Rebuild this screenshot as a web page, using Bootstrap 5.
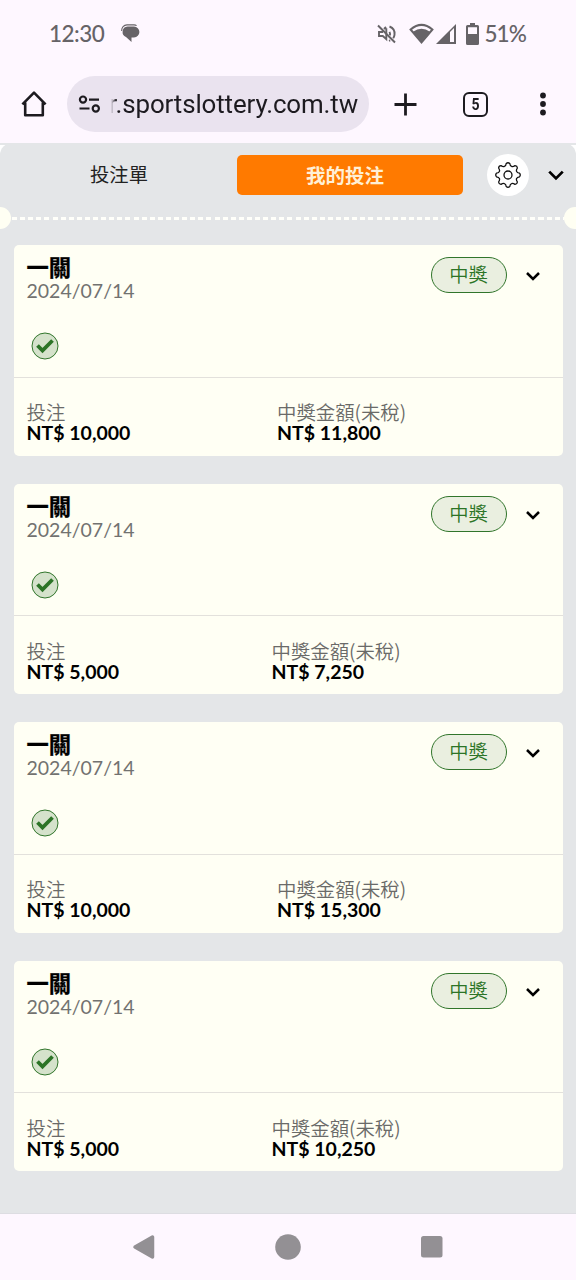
<!DOCTYPE html>
<html lang="zh-Hant">
<head>
<meta charset="utf-8">
<meta name="viewport" content="width=device-width, initial-scale=1">
<title>我的投注</title>
<link href="https://cdn.jsdelivr.net/npm/bootstrap@5.3.0/dist/css/bootstrap.min.css" rel="stylesheet">
<style>
body{width:576px;height:1280px;overflow:hidden;background:#fef7ff;font-family:Lato,"Noto Sans CJK TC",sans-serif;color:#000}
svg{display:block;flex:none}
.status{height:66px;padding:1px 50px 0 49px;color:#666367;font-size:22.5px;font-weight:500}
.status .clock{width:72px;letter-spacing:-.5px}
.status .charge{margin-left:5px;letter-spacing:-.9px}
.toolbar{height:77px;padding:0 23px 1px 20px;color:#1d1b20}
.address{width:302px;height:56px;margin-left:19px;background:#eae3ef;padding-left:11px}
.address .host{font:25.9px/58px Roboto,sans-serif;width:247px;margin-left:10px;overflow:hidden;direction:rtl;white-space:nowrap;letter-spacing:-.12px;-webkit-mask-image:linear-gradient(90deg,transparent,#000 5px)}
.tabcount{width:25px;height:25px;border:2.6px solid #1d1b20;border-radius:6px;font:700 16px/21px Roboto,sans-serif;text-align:center}
.tabcount span{display:inline-block;transform:scaleX(.88)}
.page-wrap{height:1071px;background:linear-gradient(#e4e6e8 2px,#fff 2px)}
.slip{height:1071px;background:#e4e6e8;border-radius:12px 12px 0 0;border-bottom:1px solid #dddde2}
.tabs-row{height:64px;padding:0 11px 0 1px}
.tab-link{width:236px;font-size:19.3px;color:#222;text-align:center;padding-top:1px}
.tab-on{width:226px;height:40px;padding:1px 10px 0 0;background:#ff7a00;color:#fff0d6;font-size:19.5px;font-weight:700;border-radius:5px}
.gear{width:42px;height:42px;background:#fff;margin-left:24px}
.perforation{height:22px;margin:0 -10px -1px -11px}
.perforation i{width:22px;height:22px;border-radius:50%;background:#fffff3;flex:none}
.perforation b{height:3px;flex:1;background:repeating-linear-gradient(90deg,#fffffa 0 5px,transparent 5px 8.1px);margin-left:1px}
.tickets{padding:17px 13px 0 14px;display:grid;gap:28px}
.ticket{height:210.6px;background:#fffff4;border-radius:5px}
.ticket-head{height:131.5px;padding:10px 22.5px 0 12.5px}
.ticket-title{font-size:22.3px;line-height:22px;height:24px;font-weight:700;font-family:"Noto Sans CJK TC",sans-serif;-webkit-text-stroke:.3px #000}
.ticket-date{font-size:19.5px;line-height:24px;height:23px;color:#727270}
.won{width:76px;height:36px;border:1px solid #31752b;background:#eaefe0;color:#2c7426;font-size:19.3px;font-weight:350;line-height:33px;text-align:center;margin:2px 18px 0 0}
.tick{margin:30px 0 0 4px}
.ticket-foot{border-top:1.5px solid #e3e1dc;padding:23.5px 13px 0 12.5px;line-height:21px}
.label{font-weight:350;font-size:19.4px;line-height:21px;height:21px;font-family:"Noto Sans CJK TC",sans-serif;color:#6a6a68;white-space:nowrap}
.sum{font-size:19.5px;font-weight:700;white-space:nowrap}
.stake{width:250.5px}.stake-s{width:245px}
.sysnav{height:66px;padding:0 132px 1px}
</style>
</head>
<body>
<svg width="0" height="0" class="position-absolute">
<symbol id="chev" viewBox="0 0 16 10"><path d="M2 2l6 6 6-6" fill="none" stroke="#000" stroke-width="2.5"/></symbol>
<symbol id="tick" viewBox="0 0 28 28"><circle cx="14" cy="14" r="13" fill="#d5e2cb" stroke="#31752b"/><path d="M6.5 13.5l5 5L21.5 8.500" fill="none" stroke="#2c7426" stroke-width="3.8"/></symbol>
</svg>

<header class="status d-flex align-items-center">
<span class="clock">12:30</span>
<svg width="19" height="19" viewBox="0 0 19 19"><path d="M6.500 2.600h6.500a5.200 5.200 0 0 1 0 10.800H10.500V18L5 13A5.400 5.400 0 0 1 6.500 2.600z" fill="#666367"/><path d="M.7 7C.5 3.500 2.800.900 6 .900h7c1.100 0 2 .3 2.600.8" fill="none" stroke="#666367" stroke-width="1.1"/></svg>
<svg class="ms-auto" width="20" height="20" viewBox="0 0 20 20" fill="none" stroke="#666367" stroke-width="1.900"><path d="M1 1.500l17 17"/><path d="M9.300 4.200v10.900L5.800 12H2V8h4M9 3L7 5M12.500 7.800q1 2 .3 3.600M12.500 2.500q5.800 2.300 5 8.300-.3 2-1.300 3.400M12 16.800l1.200-.5"/></svg>
<svg style="margin-left:12px" width="25" height="21" viewBox="0 0 25 21"><path d="M1.600 6.500Q12.500-2.700 23.400 6.500L12.500 19.400z" fill="none" stroke="#666367" stroke-width="2"/><path d="M4 8.800q8.500-6 17 0l-8.500 10z" fill="#666367"/></svg>
<svg style="margin-left:2px" width="20" height="20" viewBox="0 0 20 20"><path d="M0 20L20 0v20zM14 7.900V18h4V4z" fill="#666367" fill-rule="evenodd"/></svg>
<svg style="margin-left:10px" width="13" height="22" viewBox="0 0 13 22"><path d="M4 0h5v2h2.500Q13 2 13 3.500v17q0 1.500-1.500 1.500h-10Q0 22 0 20.500v-17Q0 2 1.500 2H4zM2 4.200V11h9V4.200z" fill="#666367" fill-rule="evenodd"/></svg>
<span class="charge">51%</span>
</header>

<nav class="toolbar d-flex align-items-center">
<svg width="28" height="28" viewBox="0 0 28 28" fill="none" stroke="#1d1b20" stroke-width="2.600"><path d="M2.400 14.300L14 2.700l11.600 11.600M5.200 12.500v12.700h17.600V12.500" stroke-linejoin="round"/></svg>
<div class="address rounded-pill d-flex align-items-center">
<svg width="23" height="18" viewBox="0 0 23 18" fill="none" stroke="#1d1b20" stroke-width="2.200"><circle cx="5" cy="4.600" r="3.100"/><path d="M11 4.600h10M1.500 13.500h10"/><circle cx="17.800" cy="13.500" r="3.100"/></svg>
<div class="host"><bdi>r.sportslottery.com.tw</bdi></div>
</div>
<svg style="margin-left:25px" width="23" height="23" viewBox="0 0 23 23"><path d="M11.500.5v22M.5 11.500h22" stroke="#1d1b20" stroke-width="2.800"/></svg>
<div class="tabcount" style="margin-left:46px"><span>5</span></div>
<svg class="ms-auto" width="20" height="24" viewBox="0 0 20 24" fill="#1d1b20"><circle cx="10" cy="3.500" r="2.900"/><circle cx="10" cy="12" r="2.900"/><circle cx="10" cy="20.500" r="2.900"/></svg>
</nav>

<div class="page-wrap">
<main class="slip overflow-hidden">
<div class="tabs-row d-flex align-items-center">
<div class="tab-link">投注單</div>
<div class="tab-on d-flex align-items-center justify-content-center">我的投注</div>
<div class="gear rounded-circle d-flex align-items-center justify-content-center">
<svg width="26" height="26" viewBox="0 0 26 26" fill="none" stroke="#111" stroke-width="1.300" stroke-linejoin="round"><circle cx="13" cy="13" r="4"/><path d="M11.200 1.500Q13 0 14.800 1.500Q15 4 16.600 4.400Q18 5 20 3.600q2.200.2 2.400 2.400Q21 8 21.600 9.400Q22 11 24.500 11.200q1.500 1.800 0 3.600Q22 15 21.600 16.600Q21 18 22.400 20q-.2 2.200-2.400 2.400Q18 21 16.600 21.600Q15 22 14.800 24.500q-1.800 1.500-3.600 0Q11 22 9.400 21.600Q8 21 6 22.400q-2.200-.2-2.400-2.400Q5 18 4.400 16.600Q4 15 1.500 14.800q-1.500-1.800 0-3.600Q4 11 4.400 9.400Q5 8 3.600 6Q3.800 3.800 6 3.600Q8 5 9.400 4.400Q11 4 11.200 1.500z"/></svg>
</div>
<svg class="ms-auto" width="18" height="12"><use href="#chev"/></svg>
</div>
<div class="perforation d-flex align-items-center"><i></i><b></b><i></i></div>

<div class="tickets">
<section class="ticket">
<div class="ticket-head"><div class="d-flex"><div class="me-auto"><div class="ticket-title">一關</div><div class="ticket-date">2024/07/14</div></div><div class="won rounded-pill">中獎</div><svg style="margin-top:16px" width="16" height="10"><use href="#chev"/></svg></div><svg class="tick" width="28" height="28"><use href="#tick"/></svg></div>
<div class="ticket-foot d-flex"><div class="stake"><div class="label">投注</div><div class="sum">NT$ 10,000</div></div><div><div class="label">中獎金額(未稅)</div><div class="sum">NT$ 11,800</div></div></div>
</section>
<section class="ticket">
<div class="ticket-head"><div class="d-flex"><div class="me-auto"><div class="ticket-title">一關</div><div class="ticket-date">2024/07/14</div></div><div class="won rounded-pill">中獎</div><svg style="margin-top:16px" width="16" height="10"><use href="#chev"/></svg></div><svg class="tick" width="28" height="28"><use href="#tick"/></svg></div>
<div class="ticket-foot d-flex"><div class="stake-s"><div class="label">投注</div><div class="sum">NT$ 5,000</div></div><div><div class="label">中獎金額(未稅)</div><div class="sum">NT$ 7,250</div></div></div>
</section>
<section class="ticket">
<div class="ticket-head"><div class="d-flex"><div class="me-auto"><div class="ticket-title">一關</div><div class="ticket-date">2024/07/14</div></div><div class="won rounded-pill">中獎</div><svg style="margin-top:16px" width="16" height="10"><use href="#chev"/></svg></div><svg class="tick" width="28" height="28"><use href="#tick"/></svg></div>
<div class="ticket-foot d-flex"><div class="stake"><div class="label">投注</div><div class="sum">NT$ 10,000</div></div><div><div class="label">中獎金額(未稅)</div><div class="sum">NT$ 15,300</div></div></div>
</section>
<section class="ticket">
<div class="ticket-head"><div class="d-flex"><div class="me-auto"><div class="ticket-title">一關</div><div class="ticket-date">2024/07/14</div></div><div class="won rounded-pill">中獎</div><svg style="margin-top:16px" width="16" height="10"><use href="#chev"/></svg></div><svg class="tick" width="28" height="28"><use href="#tick"/></svg></div>
<div class="ticket-foot d-flex"><div class="stake-s"><div class="label">投注</div><div class="sum">NT$ 5,000</div></div><div><div class="label">中獎金額(未稅)</div><div class="sum">NT$ 10,250</div></div></div>
</section>
</div>
</main>
</div>

<footer class="sysnav d-flex align-items-center justify-content-between">
<svg width="24" height="26" viewBox="0 0 24 26"><path d="M3 13L20.500 3v20z" fill="#939094" stroke="#939094" stroke-width="3.500" stroke-linejoin="round"/></svg>
<svg width="26" height="26"><circle cx="13" cy="13" r="12.800" fill="#939094"/></svg>
<svg width="24" height="24"><rect x="1" y="1" width="21.500" height="21.500" rx="2.500" fill="#939094"/></svg>
</footer>
<script src="https://cdn.jsdelivr.net/npm/bootstrap@5.3.0/dist/js/bootstrap.bundle.min.js"></script>
</body>
</html>
